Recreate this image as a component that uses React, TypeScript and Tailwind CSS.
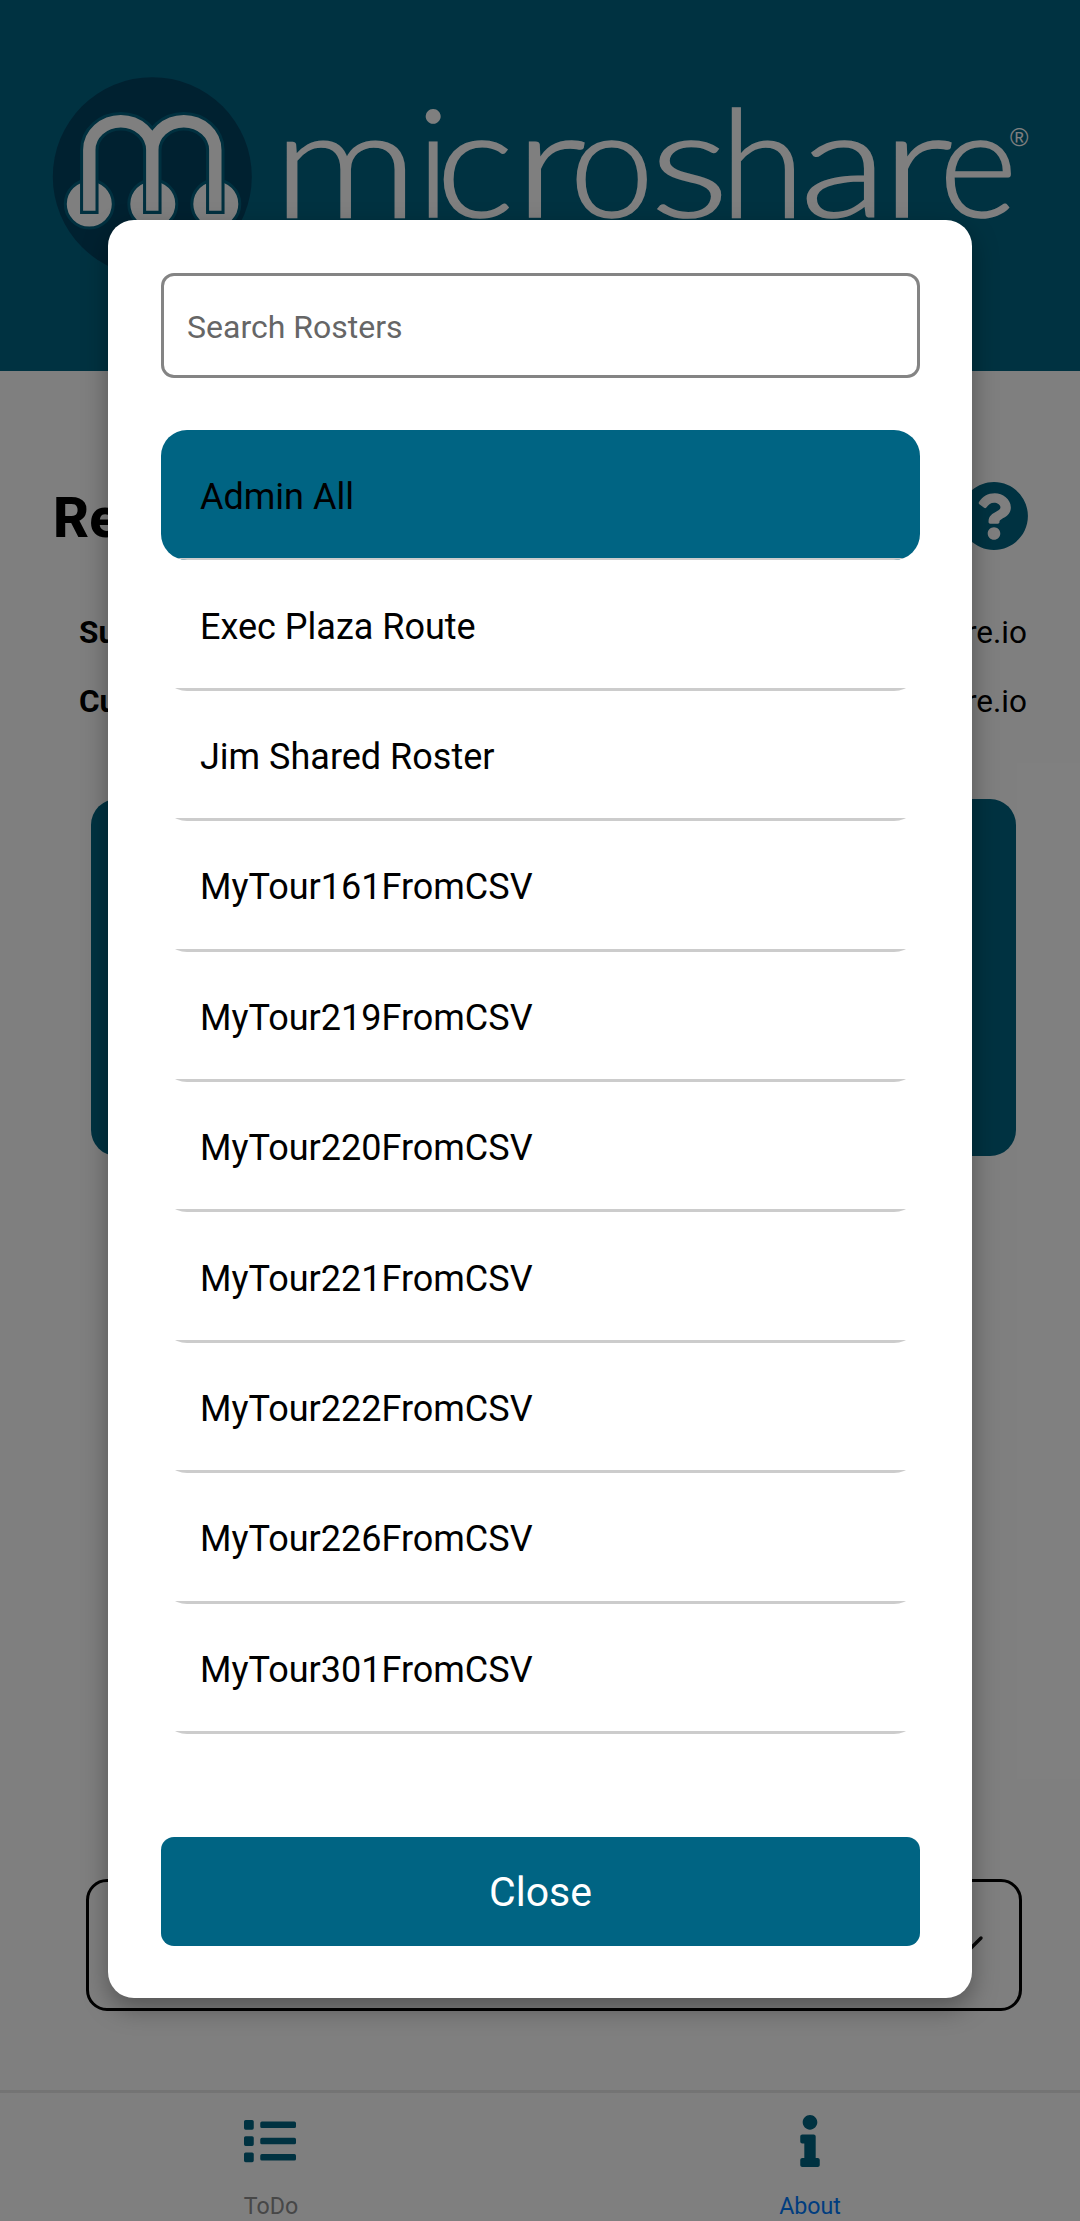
import React from "react";
import { FaInfo, FaList, FaQuestionCircle } from "react-icons/fa";

const rosters = [
  "Admin All",
  "Exec Plaza Route",
  "Jim Shared Roster",
  "MyTour161FromCSV",
  "MyTour219FromCSV",
  "MyTour220FromCSV",
  "MyTour221FromCSV",
  "MyTour222FromCSV",
  "MyTour226FromCSV",
  "MyTour301FromCSV",
];

const arches =
  "V150 A31.5 28.7 0 0 1 152.3 150 V210.7 M152.3 150 A31.5 28.7 0 0 1 215.3 150 V210.7";

// Wordmark letters: glyph, left origin, horizontal stretch
const wordmark: [string, number, number][] = [
  ["m", 273, 1.2],
  ["i", 416.5, 1],
  ["c", 436, 1.1],
  ["r", 513, 1.38],
  ["o", 569.5, 1.01],
  ["s", 650, 1.24],
  ["h", 720, 1.03],
  ["a", 800, 1.2],
  ["r", 880, 1.38],
  ["e", 939, 1],
];

function Logo() {
  return (
    <svg className="block h-[371px] w-full" viewBox="0 0 1080 371" aria-label="microshare">
      <circle cx="152.3" cy="176.7" r="99.5" fill="#004260" />
      {[89.3, 152.8, 215.8].map((x) => (
        <circle key={x} cx={x} cy="204" r="24" fill="#fff" stroke="#00607f" strokeWidth="3" />
      ))}
      <path d={"M89.3 214 " + arches.replaceAll("210.7", "214")} fill="none" stroke="#00607f" strokeWidth="18.5" />
      <path d={"M89.3 210.7 " + arches} fill="none" stroke="#fff" strokeWidth="12.4" />
      <g fill="#fff" stroke="#fff" strokeWidth="1.6" fontFamily="Lato" fontWeight="300" fontSize="150">
        {wordmark.map(([letter, x, stretch]) => (
          <text key={x} transform={`translate(${x} 217) scale(${stretch} 1)`}>
            {letter}
          </text>
        ))}
      </g>
      <text x="1010" y="146" fill="#fff" fontFamily="Liberation Sans" fontSize="25">
        ®
      </text>
    </svg>
  );
}

function InfoRow({ label }: { label: string }) {
  return (
    <div className="flex h-[69px] items-center justify-between pl-[79px] pr-[53px] text-[31.5px]">
      <span className="font-bold">{label}</span>
      <span>support@microshare.io</span>
    </div>
  );
}

function Page() {
  return (
    <div className="flex h-full flex-col bg-white">
      <header className="h-[371px] shrink-0 bg-[#006483]">
        <Logo />
      </header>
      <div className="mt-[105px] flex h-[80px] items-center justify-between pl-[53px] pr-[51px]">
        <h1 className="pt-[4px] text-[56px] font-extrabold leading-none">Resources</h1>
        <FaQuestionCircle className="size-[70px] text-[#006483]" />
      </div>
      <div className="mt-[42px]">
        <InfoRow label="Support" />
        <InfoRow label="Current User" />
      </div>
      <div className="ml-[91px] mr-[64px] mt-[63px] h-[357px] rounded-[26px] bg-[#006483]" />
      <div className="ml-[86px] mr-[58px] mt-[723px] flex h-[132px] items-center justify-end rounded-[21px] border-3 border-black pr-[34px] pt-[3px]">
        <svg className="h-[24px] w-[44px]" viewBox="0 0 44 24" fill="none" stroke="#111" strokeWidth="3.4" strokeLinecap="round">
          <path d="M4 3 L22 21 L40 3" />
        </svg>
      </div>
      <nav className="mt-auto grid h-[131px] grid-cols-2 border-t-3 border-[#e8e8e8] text-[#8e8e8f]">
        <div className="flex flex-col items-center">
          <FaList className="mt-[22px] size-[52px] text-[#006483]" />
          <span className="mt-[25px] pl-[2px] text-[23.2px] leading-[28px]">ToDo</span>
        </div>
        <div className="flex flex-col items-center">
          <FaInfo className="mt-[22px] size-[52px] text-[#006483]" />
          <span className="mt-[25px] text-[23.2px] leading-[28px] text-[#007aff]">About</span>
        </div>
      </nav>
    </div>
  );
}

function RosterDialog() {
  return (
    <div className="flex h-[1778px] w-[864px] flex-col rounded-[26px] bg-white pl-[53px] pr-[52px] pt-[53px] shadow-[0_10px_26px_rgba(0,0,0,0.34)]">
      <input
        className="h-[105px] w-full shrink-0 rounded-[13px] border-3 border-[#848484] px-[23px] pt-[2px] text-[32px] outline-none placeholder:text-[#666]"
        placeholder="Search Rosters"
      />
      <ul className="mt-[52px] h-[1355px]">
        {rosters.map((name, i) => (
          <li key={name} className="h-[130.4px] overflow-hidden rounded-[26px]">
            <div
              className={
                "flex h-full items-center border-[#ccc] pl-[39px] pt-[5px] text-[36px] " +
                (i === 0 ? "border-b-2 bg-[#006483]" : "border-b-3 bg-white")
              }
            >
              {name}
            </div>
          </li>
        ))}
      </ul>
      <button className="mt-[52px] h-[109px] shrink-0 rounded-[13px] bg-[#006483] pt-[3px] text-[41px] text-white">
        Close
      </button>
    </div>
  );
}

export default function App() {
  return (
    <main className="relative h-[2221px] w-[1080px] overflow-hidden font-[Roboto,sans-serif] text-black">
      <Page />
      <div className="absolute inset-0 flex justify-center bg-black/50 pt-[220px]">
        <RosterDialog />
      </div>
    </main>
  );
}
